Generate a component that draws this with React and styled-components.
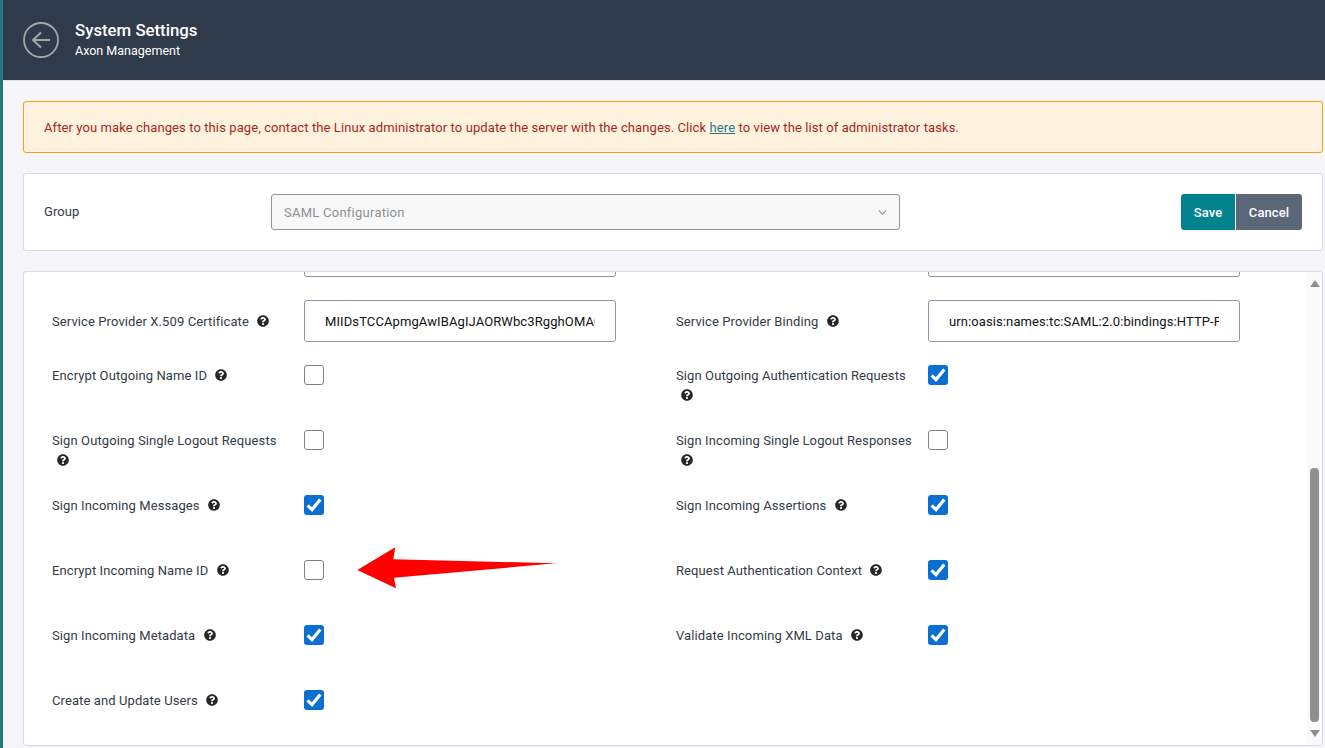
import React from 'react';
import styled, { createGlobalStyle } from 'styled-components';
import { FaQuestionCircle } from 'react-icons/fa';
import { FiChevronDown } from 'react-icons/fi';

const rows = [
  [
    { label: 'Service Provider X.509 Certificate', value: 'MIIDsTCCApmgAwIBAgIJAORWbc3RgghOMA0GCSqGSIb3DQEBCwUAMIGF' },
    { label: 'Service Provider Binding', value: 'urn:oasis:names:tc:SAML:2.0:bindings:HTTP-POST' },
  ],
  [
    { label: 'Encrypt Outgoing Name ID', checked: false },
    { label: 'Sign Outgoing Authentication Requests', checked: true },
  ],
  [
    { label: 'Sign Outgoing Single Logout Requests', checked: false },
    { label: 'Sign Incoming Single Logout Responses', checked: false },
  ],
  [
    { label: 'Sign Incoming Messages', checked: true },
    { label: 'Sign Incoming Assertions', checked: true },
  ],
  [
    { label: 'Encrypt Incoming Name ID', checked: false },
    { label: 'Request Authentication Context', checked: true },
  ],
  [
    { label: 'Sign Incoming Metadata', checked: true },
    { label: 'Validate Incoming XML Data', checked: true },
  ],
  [
    { label: 'Create and Update Users', checked: true },
  ],
];

function Field({ label, value, checked }) {
  const isInput = value !== undefined;
  return (
    <Cell>
      <Label $center={isInput}>
        <span>
          {label}{' '}
          <Help><FaQuestionCircle /></Help>
        </span>
      </Label>
      {isInput ? (
        <TextInput readOnly value={value} />
      ) : (
        <Checkbox $checked={checked}>
          {checked && (
            <svg viewBox="0 0 20 20">
              <path d="M3.6 10.4L8 14.6 16.3 4.6" fill="none" stroke="#fff" strokeWidth="3.2" />
            </svg>
          )}
        </Checkbox>
      )}
    </Cell>
  );
}

export default function App() {
  return (
    <Page>
      <GlobalStyle />
      <Header>
        <BackIcon viewBox="0 0 36 36">
          <circle cx="18" cy="18" r="17" fill="none" stroke="#a3a5a8" strokeWidth="1.8" />
          <path d="M27 18H10M18 10.5L10 18l8 7.5" fill="none" stroke="#a3a5a8" strokeWidth="2" />
        </BackIcon>
        <div>
          <Title>System Settings</Title>
          <Subtitle>Axon Management</Subtitle>
        </div>
      </Header>
      <Main>
        <Alert>
          After you make changes to this page, contact the Linux administrator to update the server with the changes. Click <a href="#here">here</a> to view the list of administrator tasks.
        </Alert>
        <GroupCard>
          <GroupLabel>Group</GroupLabel>
          <Dropdown>
            SAML Configuration
            <FiChevronDown />
          </Dropdown>
          <Buttons>
            <SaveButton>Save</SaveButton>
            <CancelButton>Cancel</CancelButton>
          </Buttons>
        </GroupCard>
        <Panel>
          <ClippedRow>
            <ClippedInput />
            <ClippedInput />
          </ClippedRow>
          {rows.map((row) => (
            <Row key={row[0].label}>
              {row.map((field) => (
                <Field key={field.label} {...field} />
              ))}
            </Row>
          ))}
          <Arrow viewBox="0 0 200 42">
            <polygon points="0.3,23 38.3,0.3 36.3,12.3 199,16.3 37,30.7 39,41.3" fill="#ff0000" />
          </Arrow>
          <ScrollTrack>
            <ArrowUp />
            <ScrollThumb />
            <ArrowDown />
          </ScrollTrack>
        </Panel>
      </Main>
    </Page>
  );
}

const GlobalStyle = createGlobalStyle`
  html, body {
    margin: 0;
    padding: 0;
    overflow: hidden;
    background: #f5f5fa;
  }
  body {
    font-family: Roboto, "Liberation Sans", sans-serif;
  }
  * {
    box-sizing: border-box;
  }
`;

const Page = styled.div`
  height: 748px;
  border-left: 3px solid #27757f;
  background: #f5f5fa;
  overflow: hidden;
`;

const Header = styled.header`
  display: flex;
  align-items: center;
  gap: 16px;
  height: 81px;
  padding: 0 0 1px 20px;
  background: #2f3a4a;
  border-bottom: 1px solid #e4e4ea;
  color: #fff;
`;

const BackIcon = styled.svg`
  width: 36px;
  height: 36px;
`;

const Title = styled.div`
  font-size: 16.8px;
  font-weight: 500;
  line-height: 22px;
`;

const Subtitle = styled.div`
  font-size: 12.5px;
  line-height: 20px;
`;

const Main = styled.main`
  display: flex;
  flex-direction: column;
  gap: 20px;
  padding: 20px 2px 0 20px;
`;

const Alert = styled.div`
  height: 52px;
  padding: 0 20px;
  line-height: 52px;
  font-size: 13px;
  letter-spacing: 0.095px;
  color: #a5281b;
  background: #fff2df;
  border: 1px solid #ff9c1a;
  border-radius: 3px;

  a {
    color: #1f7a8c;
  }
`;

const GroupCard = styled.section`
  display: flex;
  align-items: center;
  height: 78px;
  padding: 0 20px;
  background: #fff;
  border: 1px solid #d9d9de;
  border-radius: 3px;
`;

const GroupLabel = styled.div`
  width: 227px;
  margin-top: -2px;
  font-size: 13px;
  letter-spacing: 0.05px;
  color: #333b47;
`;

const Dropdown = styled.div`
  display: flex;
  align-items: center;
  justify-content: space-between;
  width: 629px;
  height: 36px;
  padding: 0 10px 0 12px;
  font-size: 13px;
  letter-spacing: 0.25px;
  color: #8d8f94;
  background: #f8f8f8;
  border: 1px solid #8a95a5;
  border-radius: 3px;

  svg {
    width: 13px;
    height: 13px;
  }
`;

const Buttons = styled.div`
  display: flex;
  gap: 1px;
  margin-left: auto;
`;

const SaveButton = styled.button`
  height: 36px;
  width: 54px;
  padding: 0;
  border: none;
  border-radius: 3px 0 0 3px;
  font: 500 13px Roboto, sans-serif;
  letter-spacing: 0.1px;
  color: #fff;
  background: #00838f;
`;

const CancelButton = styled(SaveButton)`
  width: 66px;
  border-radius: 0 3px 3px 0;
  background: #5b6679;
`;

const Panel = styled.section`
  position: relative;
  height: 475px;
  padding: 0 28px;
  background: #fff;
  border: 1px solid #d9d9de;
  border-radius: 3px;
  overflow: hidden;
`;

const ClippedRow = styled.div`
  display: grid;
  grid-template-columns: 624px 624px;
  grid-template-rows: 28px;
  align-items: end;
  height: 28px;
  overflow: hidden;
`;

const ClippedInput = styled.div`
  height: 42px;
  width: 312px;
  margin-left: 252px;
  margin-bottom: 23px;
  border: 1px solid #8a95a5;
  border-radius: 3px;
`;

const Row = styled.div`
  display: grid;
  grid-template-columns: 624px 624px;
  height: 65px;
`;

const Cell = styled.div`
  display: flex;
  align-items: flex-start;
`;

const Label = styled.label`
  display: flex;
  align-items: ${(p) => (p.$center ? 'center' : 'flex-start')};
  width: 252px;
  min-height: ${(p) => (p.$center ? '42px' : '20px')};
  padding: 1px 10px 0 0;
  font-size: 13px;
  line-height: 20px;
  letter-spacing: 0.1px;
  color: #333b47;
`;

const Help = styled.span`
  display: inline-block;
  margin-left: 5px;
  vertical-align: -1px;
  line-height: 0;
  color: #262626;

  svg {
    width: 12px;
    height: 12px;
  }
`;

const TextInput = styled.input`
  width: 312px;
  height: 42px;
  padding: 0 20px 0 20px;
  font: 13px Roboto, sans-serif;
  letter-spacing: 0.1px;
  color: #111;
  background: #fff;
  border: 1px solid #8a95a5;
  border-radius: 3px;
  outline: none;
`;

const Checkbox = styled.span`
  display: flex;
  width: 20px;
  height: 20px;
  background: ${(p) => (p.$checked ? '#0a6fd1' : '#fff')};
  border: ${(p) => (p.$checked ? 'none' : '1px solid #808080')};
  border-radius: 3px;

  svg {
    width: 20px;
    height: 20px;
  }
`;

const Arrow = styled.svg`
  position: absolute;
  left: 333px;
  top: 275px;
  width: 200px;
  height: 42px;
`;

const ScrollTrack = styled.div`
  position: absolute;
  top: 0;
  right: 0;
  bottom: 0;
  width: 15px;
  display: flex;
  flex-direction: column;
  align-items: center;
  background: #fafafa;
`;

const ArrowUp = styled.div`
  margin-top: 8px;
  border-left: 5px solid transparent;
  border-right: 5px solid transparent;
  border-bottom: 7px solid #8f8f8f;
`;

const ScrollThumb = styled.div`
  width: 9px;
  height: 254px;
  margin-top: 181px;
  background: #8f8f8f;
  border-radius: 4px;
`;

const ArrowDown = styled.div`
  margin-top: 8px;
  border-left: 5px solid transparent;
  border-right: 5px solid transparent;
  border-top: 7px solid #8f8f8f;
`;
